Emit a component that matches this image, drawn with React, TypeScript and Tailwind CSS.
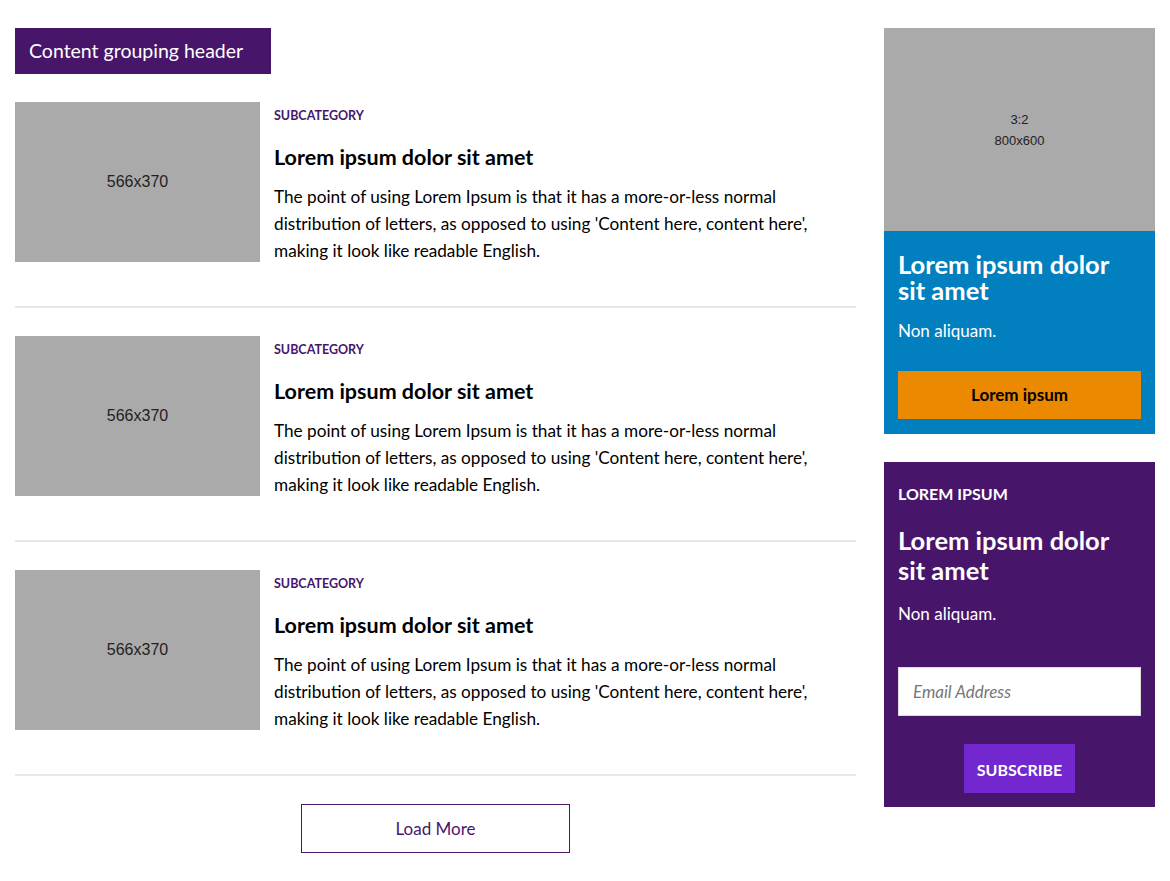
import React from 'react';

const articles = [1, 2, 3].map((id) => ({
  id,
  subcategory: 'SUBCATEGORY',
  title: 'Lorem ipsum dolor sit amet',
  body: "The point of using Lorem Ipsum is that it has a more-or-less normal distribution of letters, as opposed to using 'Content here, content here', making it look like readable English.",
}));

const ArticleRow = ({ subcategory, title, body }: { subcategory: string; title: string; body: string }) => (
  <div>
    <div className="flex gap-[14px] h-[160px]">
      <div className="w-[245px] h-[160px] shrink-0 bg-[#aaaaaa] flex items-center justify-center font-['Liberation_Sans',sans-serif] text-[16px] text-[#222]">
        566x370
      </div>
      <div className="flex-1 pt-[6px]">
        <p className="text-[12.5px] font-bold text-[#47166b] leading-[16px]">{subcategory}</p>
        <h3 className="mt-[20px] text-[21.5px] font-bold text-black leading-[26px]">{title}</h3>
        <p className="mt-[13px] text-[17.2px] leading-[27px] text-black">{body}</p>
      </div>
    </div>
    <div className="mt-[44px] mb-[28px] h-[2px] bg-[#e8e8e8]" />
  </div>
);

export default function App() {
  return (
    <div className="min-h-screen bg-white font-['Lato',sans-serif] px-[15px] pt-[28px]">
      <div className="flex gap-[28px]">
        {/* Main content */}
        <main className="flex-1">
          <div className="bg-[#47166b] text-white text-[19.5px] leading-[46px] px-[14px] w-[256px]">
            Content grouping header
          </div>
          <div className="mt-[28px]">
            {articles.map((a) => (
              <ArticleRow key={a.id} {...a} />
            ))}
          </div>
          <div className="flex justify-center">
            <button className="w-[269px] h-[49px] border border-[#47166b] text-[#47166b] text-[17px] bg-white">
              Load More
            </button>
          </div>
        </main>

        {/* Sidebar */}
        <aside className="w-[271px] shrink-0">
          <div className="h-[203px] bg-[#aaaaaa] flex flex-col items-center justify-center font-['Liberation_Sans',sans-serif] text-[13px] text-[#222] leading-[21px]">
            <span>3:2</span>
            <span>800x600</span>
          </div>
          <div className="bg-[#027fbf] px-[14px] pt-[20px] pb-[15px] text-white">
            <h2 className="max-w-[225px] text-[25.5px] font-bold leading-[26px]">Lorem ipsum dolor sit amet</h2>
            <p className="mt-[16px] text-[17px] leading-[24px]">Non aliquam.</p>
            <button className="mt-[28px] w-full h-[48px] bg-[#eb8900] text-black font-bold text-[17px]">
              Lorem ipsum
            </button>
          </div>

          <div className="mt-[28px] bg-[#47166b] px-[14px] pt-[22px] pb-[14px] text-white">
            <p className="text-[16px] font-bold leading-[20px]">LOREM IPSUM</p>
            <h2 className="mt-[21px] max-w-[225px] text-[25.5px] font-bold leading-[30px]">Lorem ipsum dolor sit amet</h2>
            <p className="mt-[17px] text-[17px] leading-[24px]">Non aliquam.</p>
            <input
              type="text"
              placeholder="Email Address"
              className="mt-[41px] w-full h-[49px] bg-white border border-[#dddddd] px-[14px] text-[17px] italic text-[#333] placeholder:text-[#777] outline-none"
            />
            <div className="mt-[28px] flex justify-center">
              <button className="w-[111px] h-[49px] pt-[3px] bg-[#7227cf] text-white font-bold text-[16px]">
                SUBSCRIBE
              </button>
            </div>
          </div>
        </aside>
      </div>
    </div>
  );
}
